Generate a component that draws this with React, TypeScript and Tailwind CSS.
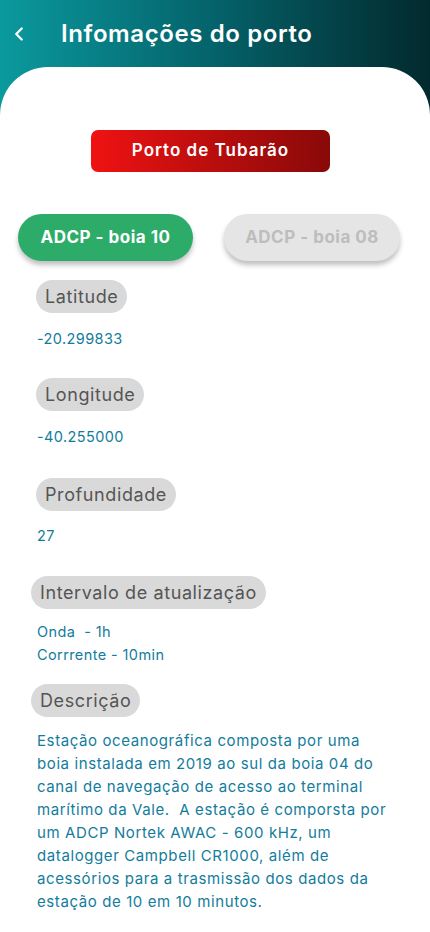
import { ChevronLeft } from 'lucide-react';

const Label = ({ text, className = '' }: { text: string; className?: string }) => (
  <span className={`inline-flex h-[33px] items-center rounded-full bg-[#d9d9d9] px-[9px] text-[18px] tracking-[0.6px] text-[#555555] ${className}`}>
    {text}
  </span>
);

const App = () => {
  return (
    <div
      className="min-h-[932px] w-[430px] bg-gradient-to-r from-[#0a9a9e] via-[#05626a] to-[#022a2e]"
      style={{ fontFamily: 'Inter, "Noto Sans", sans-serif' }}
    >
      <div className="flex h-[67px] items-center">
        <ChevronLeft className="ml-[8px] h-[22px] w-[22px] text-white" strokeWidth={2.5} />
        <h1 className="ml-[31px] text-[24px] font-semibold tracking-[0.6px] text-white">Infomações do porto</h1>
      </div>

      <div className="min-h-[865px] rounded-t-[48px] bg-white pt-[63px]">
        <button className="ml-[91px] h-[42px] w-[239px] rounded-[7px] bg-gradient-to-r from-[#f01212] to-[#890909] text-[17px] font-semibold tracking-[1px] text-white">
          Porto de Tubarão
        </button>

        <div className="mt-[42px] flex gap-[31px] px-[18px]">
          <button className="h-[47px] w-[175px] rounded-full bg-[#2dac69] text-[17px] font-bold tracking-[0.5px] text-white shadow-[0_4px_5px_rgba(0,0,0,0.25)]">
            ADCP - boia 10
          </button>
          <button className="h-[47px] w-[176px] rounded-full bg-[#e5e5e5] text-[17px] font-bold tracking-[0.5px] text-[#bdbdbd] shadow-[0_4px_5px_rgba(0,0,0,0.25)]">
            ADCP - boia 08
          </button>
        </div>

        <div className="mt-[19px] flex flex-col text-[14.5px] tracking-[0.4px] text-[#137c9c]">
          <div className="pl-[36px]">
            <Label text="Latitude" />
            <p className="ml-px mt-[15px]">-20.299833</p>
          </div>
          <div className="mt-[28px] pl-[36px]">
            <Label text="Longitude" />
            <p className="ml-px mt-[15px]">-40.255000</p>
          </div>
          <div className="mt-[30px] pl-[36px]">
            <Label text="Profundidade" />
            <p className="ml-px mt-[14px]">27</p>
          </div>
          <div className="mt-[30px] pl-[31px]">
            <Label text="Intervalo de atualização" />
            <div className="ml-[6px] mt-[11px] leading-[23px]">
              <p>Onda&nbsp; - 1h</p>
              <p>Corrrente - 10min</p>
            </div>
          </div>
          <div className="mt-[18px] pl-[31px]">
            <Label text="Descrição" />
            <p className="ml-[6px] mt-[12px] w-[358px] text-[15px] leading-[23px] tracking-[0.6px]">
              Estação oceanográfica composta por uma boia instalada em 2019 ao sul da boia 04 do canal de navegação de acesso ao terminal marítimo da Vale.&nbsp; A estação é comporsta por um ADCP Nortek AWAC - 600 kHz, um datalogger Campbell CR1000, além de acessórios para a trasmissão dos dados da estação de 10 em 10 minutos.
            </p>
          </div>
        </div>
      </div>
    </div>
  );
};

export default App;
